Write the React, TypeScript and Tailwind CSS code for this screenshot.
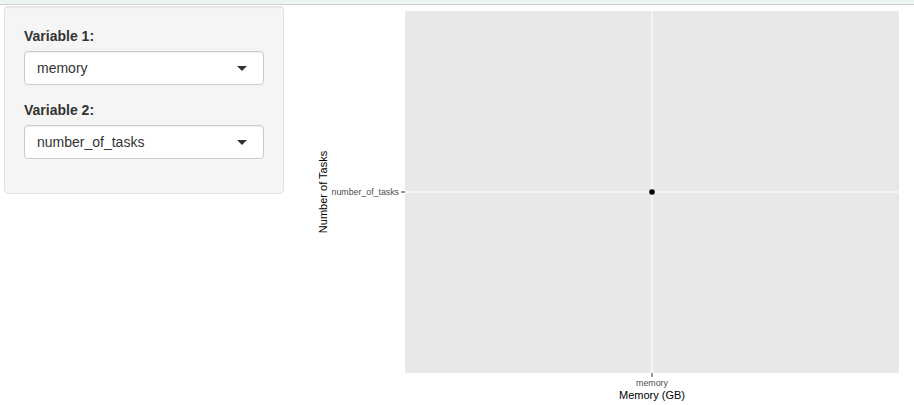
import React from "react";

const font = { fontFamily: '"Liberation Sans", Helvetica, Arial, sans-serif' };

function SelectBox({ value }: { value: string }) {
  return (
    <div className="flex h-[34px] w-full items-center justify-between rounded-[4px] border border-[#cccccc] bg-white pl-3 pr-4 text-[14px] text-[#333333] shadow-[inset_0_1px_1px_rgba(0,0,0,0.075)]">
      <span>{value}</span>
      <span className="h-0 w-0 border-x-[5px] border-t-[5px] border-x-transparent border-t-[#333333]" />
    </div>
  );
}

function Field({ label, value }: { label: string; value: string }) {
  return (
    <div className="mb-[15px]">
      <div className="mb-[5px] text-[14px] font-bold leading-5 text-[#333333]">{label}</div>
      <SelectBox value={value} />
    </div>
  );
}

function Plot() {
  return (
    <svg width={630} height={400} className="block" style={font}>
      <rect x={121} y={6} width={494} height={362} fill="#e8e8e8" />
      <line x1={368} y1={6} x2={368} y2={368} stroke="#ffffff" strokeWidth={1.1} />
      <line x1={121} y1={187} x2={615} y2={187} stroke="#ffffff" strokeWidth={1.1} />
      <circle cx={368} cy={187} r={2.8} fill="#000000" />
      <line x1={117} y1={187} x2={121} y2={187} stroke="#333333" strokeWidth={1} />
      <text x={115} y={187} textAnchor="end" dominantBaseline="central" fontSize={8.8} fill="#4d4d4d">
        number_of_tasks
      </text>
      <text
        x={39}
        y={187}
        textAnchor="middle"
        dominantBaseline="central"
        fontSize={11}
        fill="#000000"
        transform="rotate(-90 39 187)"
      >
        Number of Tasks
      </text>
      <line x1={368} y1={368} x2={368} y2={372} stroke="#333333" strokeWidth={1} />
      <text x={368} y={378} textAnchor="middle" dominantBaseline="central" fontSize={8.8} fill="#4d4d4d">
        memory
      </text>
      <text x={368} y={390} textAnchor="middle" dominantBaseline="central" fontSize={11} fill="#000000">
        Memory (GB)
      </text>
    </svg>
  );
}

export default function App() {
  return (
    <div className="h-[405px] w-[914px] overflow-hidden bg-white" style={font}>
      <div className="h-[5px] border-b border-[#c9d1d1] bg-[#eef4f4]" />
      <div className="flex">
        <div className="ml-[4px] mt-px w-[280px] self-start rounded-[4px] border border-[#e3e3e3] bg-[#f5f5f5] px-[19px] pb-[19px] pt-[19px] shadow-[inset_0_1px_1px_rgba(0,0,0,0.05)]">
          <Field label="Variable 1:" value="memory" />
          <Field label="Variable 2:" value="number_of_tasks" />
        </div>
        <Plot />
      </div>
    </div>
  );
}
